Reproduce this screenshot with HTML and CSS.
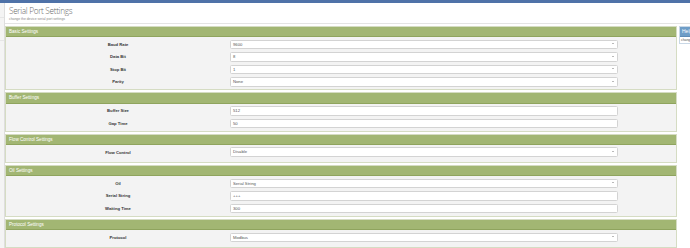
FILE: index.html
```html
<!DOCTYPE html>
<html>
<head>
<meta charset="utf-8">
<title>Serial Port Settings</title>
<link rel="stylesheet" href="styles.css">
</head>
<body>
<div class="topbar"></div>
<div class="layout">
  <aside class="sidebar">
    <div class="side-item"></div>
    <div class="side-item"></div>
  </aside>
  <div class="content">
    <header class="page-head">
      <h1 class="page-title">Serial Port Settings</h1>
      <p class="page-sub">change the device serial port settings</p>
    </header>
    <div class="columns">
      <main class="main">
        <section class="panel">
          <div class="panel-head">Basic Settings</div>
          <div class="panel-body">
            <div class="row"><label class="lbl">Baud Rate</label><div class="field select">9600<span class="caret"></span></div></div>
            <div class="row"><label class="lbl">Data Bit</label><div class="field select">8<span class="caret"></span></div></div>
            <div class="row"><label class="lbl">Stop Bit</label><div class="field select">1<span class="caret"></span></div></div>
            <div class="row"><label class="lbl">Parity</label><div class="field select">None<span class="caret"></span></div></div>
          </div>
        </section>
        <section class="panel">
          <div class="panel-head">Buffer Settings</div>
          <div class="panel-body">
            <div class="row"><label class="lbl">Buffer Size</label><div class="field">512</div></div>
            <div class="row"><label class="lbl">Gap Time</label><div class="field">50</div></div>
          </div>
        </section>
        <section class="panel">
          <div class="panel-head">Flow Control Settings</div>
          <div class="panel-body single">
            <div class="row"><label class="lbl">Flow Control</label><div class="field select">Disable<span class="caret"></span></div></div>
          </div>
        </section>
        <section class="panel">
          <div class="panel-head">Oil Settings</div>
          <div class="panel-body">
            <div class="row"><label class="lbl">Oil</label><div class="field select">Serial String<span class="caret"></span></div></div>
            <div class="row"><label class="lbl">Serial String</label><div class="field">+++</div></div>
            <div class="row"><label class="lbl">Waiting Time</label><div class="field">300</div></div>
          </div>
        </section>
        <section class="panel">
          <div class="panel-head">Protocol Settings</div>
          <div class="panel-body single">
            <div class="row"><label class="lbl">Protocol</label><div class="field select">Modbus<span class="caret"></span></div></div>
          </div>
        </section>
      </main>
      <aside class="help">
        <div class="help-head">Help</div>
        <div class="help-body">change the device serial port settings</div>
      </aside>
    </div>
  </div>
</div>
</body>
</html>
```
FILE: styles.css
```css
html, body {
  margin: 0;
  padding: 0;
  background: #ffffff;
  overflow: hidden;
}
body {
  width: 690px;
  height: 248px;
  font-family: "Liberation Sans", Arial, sans-serif;
  color: #333;
}
.topbar {
  height: 3px;
  background: #4f72a8;
}
.layout {
  display: flex;
  height: 245px;
}
.sidebar {
  width: 4px;
  flex: none;
  background: #f4f4f4;
  border-right: 1px solid #dedede;
  padding-top: 14px;
}
.side-item {
  height: 22px;
  border-top: 1px solid #e6e6e6;
}
.content {
  flex: 1;
  min-width: 0;
  display: flex;
  flex-direction: column;
}
.page-head {
  height: 19px;
  padding: 1px 0 0 4px;
  border-bottom: 1px solid #e4e4e4;
}
.page-title {
  margin: 0;
  font-family: "Open Sans", "Liberation Sans", sans-serif;
  font-weight: 300;
  font-size: 8.2px;
  line-height: 13px;
  color: #6a6a6a;
  letter-spacing: -0.3px;
}
.page-sub {
  margin: 0;
  font-size: 3.4px;
  line-height: 5px;
  color: #888;
}
.columns {
  display: flex;
  gap: 2px;
  padding-top: 2px;
  align-items: flex-start;
}
.main {
  width: 672px;
  flex: none;
  display: flex;
  flex-direction: column;
  gap: 2px;
}
.panel {
  border: 1px solid #d5dcc3;
  background: #f3f3f3;
}
.panel-head {
  height: 9.5px;
  background: #a2b673;
  border-bottom: 1px solid #8fa45e;
  color: #fff;
  font-size: 4.6px;
  line-height: 9.5px;
  padding-left: 3px;
}
.panel-body {
  padding: 2.4px 0 2.6px 0;
  display: flex;
  flex-direction: column;
  gap: 3.1px;
}
.panel-body.single {
  padding-bottom: 5px;
}
.row {
  display: grid;
  grid-template-columns: 224px 388px;
  align-items: center;
}
.lbl {
  text-align: center;
  font-weight: bold;
  font-size: 4.2px;
  color: #333;
}
.field {
  position: relative;
  height: 7.4px;
  border: 1px solid #d3d3d3;
  border-radius: 1.5px;
  background: #fff;
  font-size: 4.2px;
  line-height: 7.4px;
  padding-left: 2px;
  color: #555;
}
.caret {
  position: absolute;
  right: 3px;
  top: 2.6px;
  width: 0;
  height: 0;
  border-left: 1.3px solid transparent;
  border-right: 1.3px solid transparent;
  border-top: 1.6px solid #777;
}
.help {
  width: 60px;
  flex: none;
  border: 1px solid #c9d8e6;
  background: #fff;
}
.help-head {
  height: 9.5px;
  background: #6e9dc7;
  border-bottom: 1px solid #5d8bb5;
  color: #fff;
  font-size: 5px;
  line-height: 9.5px;
  padding-left: 2px;
}
.help-body {
  font-size: 3.4px;
  line-height: 5px;
  padding: 0.5px 1px;
  color: #555;
  white-space: nowrap;
}
```
